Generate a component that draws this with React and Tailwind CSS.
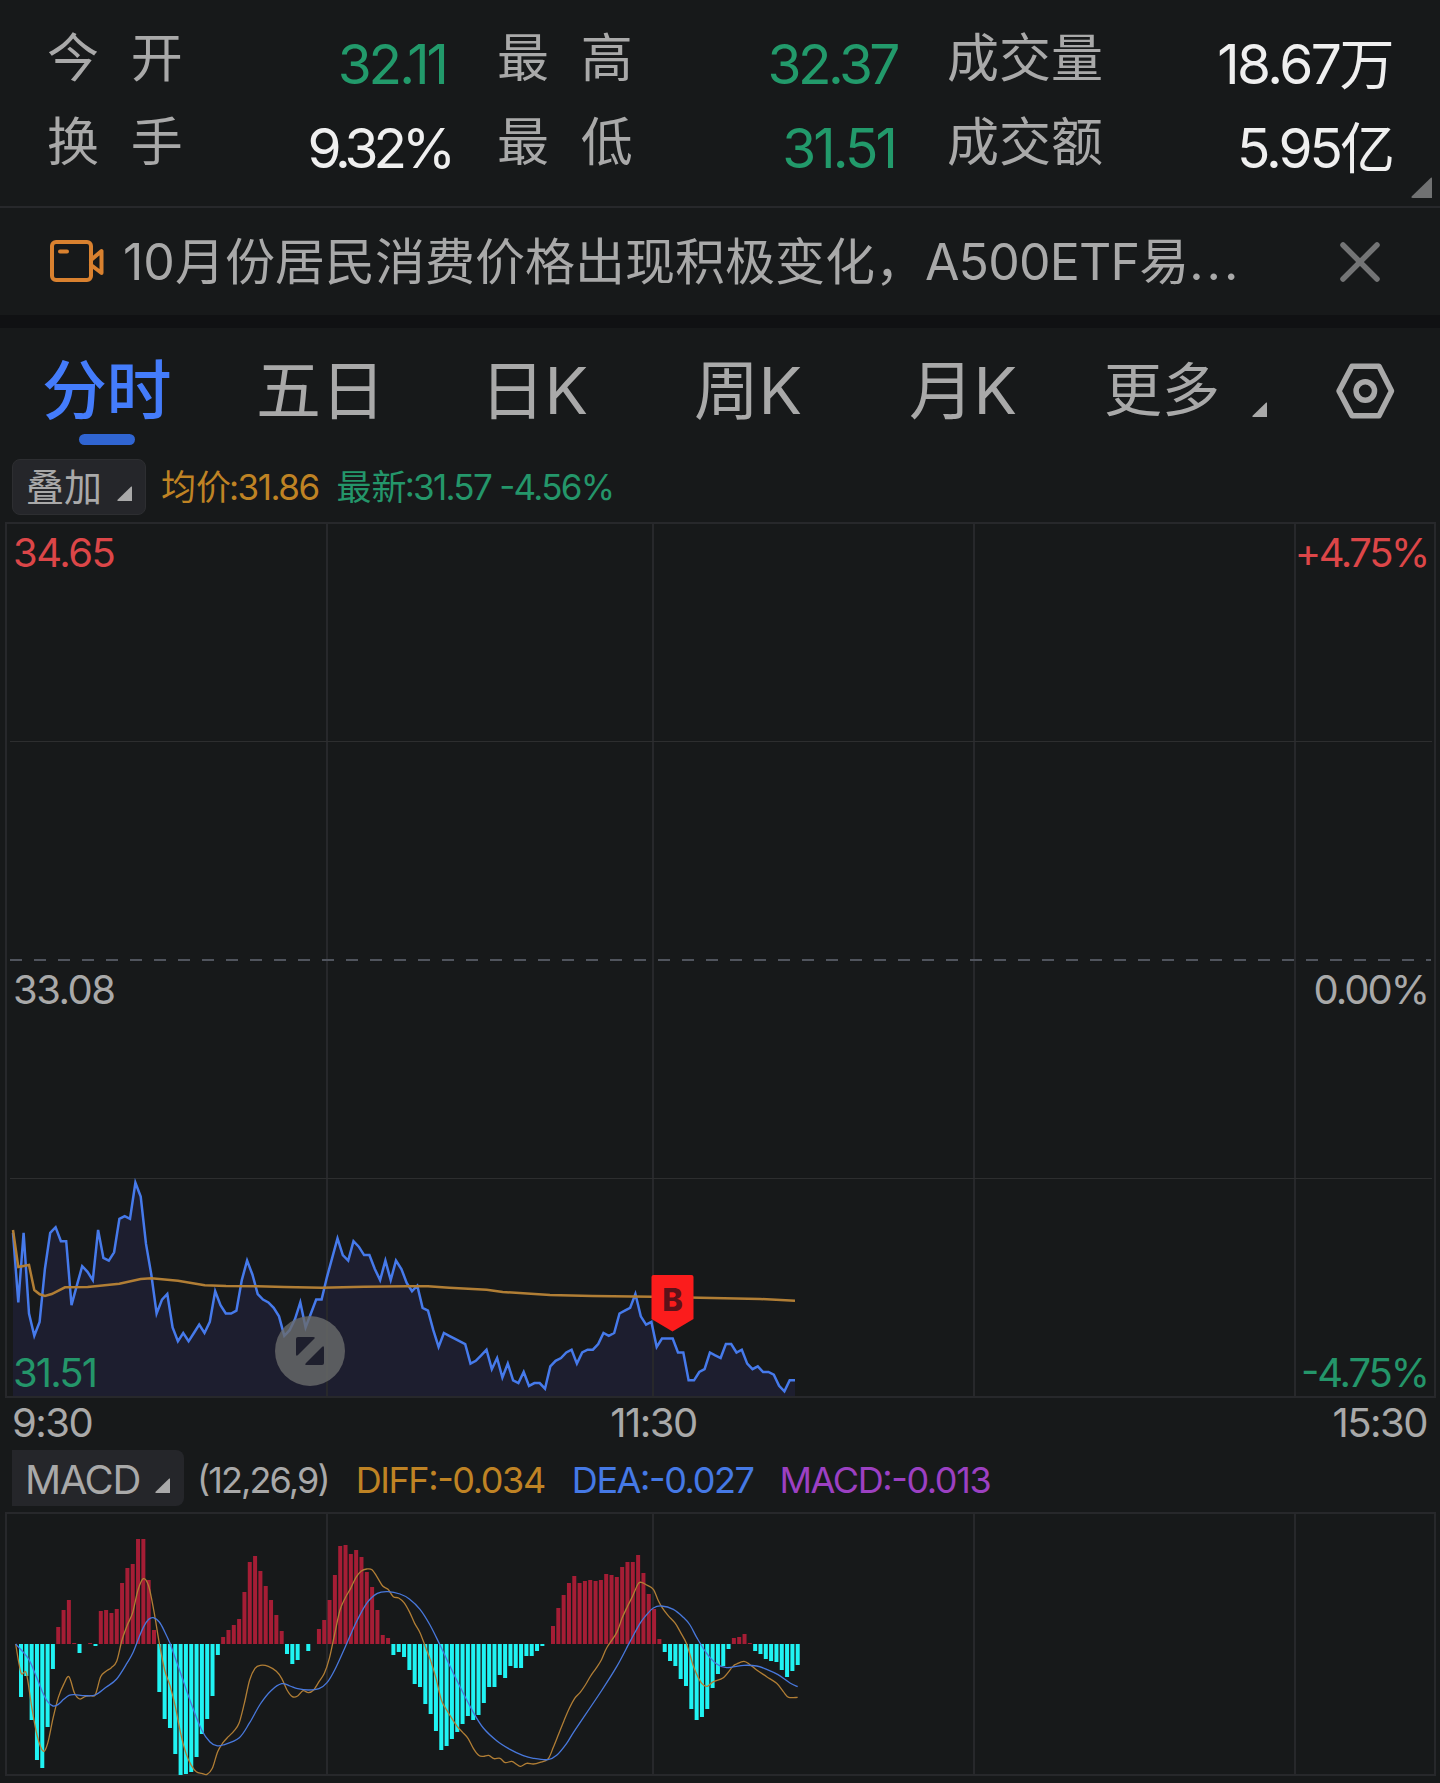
import { useState } from "react"

const QUOTES = [
  { label: '今 开', value: '32.11', className: 'mr-[2px] text-[#229a6b] tracking-[-3px]' },
  { label: '最 高', value: '32.37', className: 'mr-[1px] text-[#229a6b] tracking-[-3.5px]' },
  { label: '成交量', value: '18.67万', className: 'text-[#efefef] tracking-[-2.5px]' },
  { label: '换 手', value: '9.32%', className: '-mr-[3px] text-[#efefef] tracking-[-5px]' },
  { label: '最 低', value: '31.51', className: 'mr-[3px] text-[#229a6b] tracking-[-2.9px]' },
  { label: '成交额', value: '5.95亿', className: 'text-[#efefef] tracking-[-3px]' },
]

const TABS = ['分时', '五日', '日K', '周K', '月K', '更多']

// one value per minute, in cents above the bottom of the scale (31.51)
const PRICES = [
  59, 34, 59, 30, 22, 27, 46, 59, 61, 56, 56, 33, 40, 47, 45, 42, 60, 50, 49, 52,
  64, 65, 64, 77, 72, 55, 44, 30, 35, 37, 25, 20, 23, 20, 23, 26, 23, 27, 38, 33,
  30, 30, 31, 42, 49, 44, 37, 35, 34, 32, 29, 22, 24, 28, 34, 25, 30, 35, 35, 43,
  50, 57, 51, 49, 56, 54, 51, 51, 46, 42, 49, 42, 49, 46, 41, 38, 40, 32, 31, 24,
  18, 23, 22, 21, 20, 19, 12, 13, 15, 17, 10, 14, 7, 12, 6, 5, 9, 4, 5, 5,
  3, 11, 13, 14, 16, 17, 12, 16, 17, 17, 19, 23, 22, 23, 30, 31, 32, 37, 29, 26,
  27, 18, 21, 21, 21, 16, 16, 6, 6, 9, 10, 16, 15, 14, 19, 19, 16, 17, 12, 10,
  11, 9, 9, 8, 4, 2, 6, 6,
]

const AVERAGE = [
  [13, 708], [18.3, 745], [29, 743], [34.3, 768], [39.7, 772.3], [45, 774], [51.7, 772], [65, 765.3],
  [87.7, 765], [119.3, 761.7], [140.7, 757], [151.3, 756.3], [178, 758.7], [204.7, 763.3], [226, 764],
  [257.7, 764.3], [284.3, 765], [321.7, 765.7], [364.3, 764.7], [406.7, 764.3], [428, 764.3],
  [449.3, 765.7], [486.7, 767.7], [502.7, 770], [550, 773], [592.7, 774], [652.7, 774.7],
  [700, 775.7], [760, 777], [795, 778.7],
]

const MACD_BARS = [
  -53, -32, -76, -116, -124, -83, -25, 17, 34, 44, 1, -9, 0, 1, -2, 33, 34, 31, 35, 61,
  76, 80, 105, 105, 64, 14, -48, -75, -84, -110, -131, -130, -128, -113, -90, -75, -52, -11, 7, 14,
  19, 25, 52, 82, 88, 73, 58, 44, 29, 13, -10, -20, -16, 0, -7, 0, 15, 24, 44, 69,
  98, 99, 90, 94, 87, 72, 57, 34, 9, 6, -11, -8, -13, -26, -40, -43, -60, -70, -87, -106,
  -102, -95, -88, -80, -72, -76, -71, -59, -43, -43, -31, -34, -22, -24, -24, -12, -12, -7, -2, 0,
  18, 36, 49, 61, 68, 61, 63, 64, 63, 64, 70, 69, 67, 77, 82, 82, 89, 71, 50, 35,
  5, -8, -17, -22, -35, -42, -65, -76, -73, -65, -44, -30, -22, -5, 6, 7, 10, 1, -7, -10,
  -15, -17, -18, -26, -33, -27, -21,
]

// curve points are kept at 3x resolution
const DIFF = [
  [47, 432], [63, 518], [79, 520], [95, 620], [111, 705], [129, 753], [143, 730], [159, 655], [175, 592],
  [191, 553], [207, 530], [223, 578], [239, 597], [255, 590], [271, 587], [286, 584], [302, 530],
  [318, 514], [334, 503], [350, 484], [366, 420], [382, 375], [398, 338], [414, 270], [430, 236],
  [446, 258], [462, 335], [478, 430], [494, 510], [510, 557], [526, 620], [542, 700], [558, 760],
  [574, 796], [589, 815], [605, 820], [621, 823], [637, 805], [653, 755], [669, 728], [685, 710],
  [701, 694], [717, 670], [733, 610], [749, 540], [765, 505], [781, 496], [805, 499], [829, 514],
  [845, 535], [861, 570], [877, 590], [893, 588], [909, 572], [925, 578], [941, 570], [957, 545],
  [973, 520], [988, 475], [1004, 402], [1020, 330], [1036, 293], [1052, 265], [1068, 232], [1084, 213],
  [1100, 207], [1116, 209], [1132, 232], [1148, 258], [1164, 268], [1180, 290], [1196, 294],
  [1212, 308], [1228, 335], [1244, 370], [1260, 398], [1276, 440], [1292, 482], [1308, 535],
  [1324, 600], [1340, 630], [1356, 656], [1372, 680], [1388, 697], [1404, 715], [1420, 745],
  [1436, 766], [1450, 769], [1466, 766], [1482, 776], [1500, 775], [1516, 788], [1535, 784],
  [1550, 793], [1562, 799], [1580, 790], [1600, 792], [1620, 787], [1644, 777], [1660, 742],
  [1676, 702], [1692, 662], [1708, 625], [1724, 595], [1740, 578], [1756, 555], [1772, 528],
  [1788, 505], [1804, 480], [1820, 444], [1850, 398], [1866, 355], [1882, 320], [1898, 288],
  [1914, 252], [1924, 247], [1940, 255], [1960, 268], [1974, 300], [1986, 322], [2004, 346],
  [2026, 370], [2042, 398], [2060, 432], [2080, 498], [2096, 535], [2108, 553], [2122, 559],
  [2140, 545], [2170, 533], [2198, 500], [2210, 492], [2232, 484], [2250, 494], [2270, 510],
  [2300, 530], [2330, 550], [2350, 575], [2366, 592], [2393, 592],
]

const DEA = [
  [47, 432], [85, 476], [111, 535], [127, 575], [143, 605], [159, 618], [175, 613], [191, 598],
  [207, 586], [223, 584], [255, 587], [286, 585], [318, 562], [350, 537], [382, 488], [398, 460],
  [414, 420], [430, 382], [446, 358], [460, 353], [478, 366], [494, 395], [510, 430], [526, 475],
  [542, 520], [574, 612], [605, 690], [630, 726], [650, 737], [669, 735], [717, 714], [749, 668],
  [781, 612], [813, 572], [845, 551], [870, 558], [893, 566], [925, 570], [957, 566], [981, 548],
  [1004, 510], [1036, 440], [1068, 368], [1100, 310], [1132, 280], [1164, 275], [1200, 282],
  [1228, 297], [1260, 328], [1290, 375], [1320, 435], [1370, 540], [1420, 637], [1450, 684],
  [1490, 722], [1530, 748], [1570, 767], [1600, 775], [1644, 779], [1670, 766], [1700, 730],
  [1724, 692], [1804, 573], [1850, 500], [1890, 425], [1920, 370], [1940, 344], [1960, 324],
  [1984, 318], [2020, 328], [2050, 352], [2070, 375], [2090, 412], [2120, 460], [2150, 492],
  [2180, 503], [2232, 496], [2270, 498], [2300, 508], [2334, 524], [2370, 549], [2393, 560],
]

const STEP = 5.32
const GRID_X = [327, 653, 974, 1295]

const priceLine = PRICES.map((p, i) => `${(13 + i * STEP).toFixed(1)},${(875 - p * 2.783).toFixed(1)}`).join(' ')

const smoothPath = (points) => {
  const pts = points.map(([x, y]) => [x / 3, (y - 36) / 3])
  let d = `M${pts[0][0]},${pts[0][1]}`
  for (let i = 0; i < pts.length - 1; i++) {
    const a = pts[i - 1] || pts[i]
    const b = pts[i]
    const c = pts[i + 1]
    const e = pts[i + 2] || c
    d += ` C${b[0] + (c[0] - a[0]) / 6},${b[1] + (c[1] - a[1]) / 6} ${c[0] - (e[0] - b[0]) / 6},${c[1] - (e[1] - b[1]) / 6} ${c[0]},${c[1]}`
  }
  return d
}

function Corner({ size, className }) {
  return (
    <svg width={size} height={size} viewBox="0 0 15 15" className={className} fill="currentColor">
      <path d="M14.2 0.6 Q15 0 15 1 V15 H1.2 Q-0.3 15 0.6 13.8 Z" />
    </svg>
  )
}

function Header() {
  return (
    <div className="relative h-[208px] border-b-2 border-[#27282b] pt-[15px] pl-12">
      <div className="grid grid-cols-[400px_400px_444px] gap-x-[50px]">
        {QUOTES.map(q => (
          <div key={q.label} className="flex h-[84px] items-center justify-between">
            <span className="-ml-px pt-[4px] text-[52px] leading-[80px] [word-spacing:17px]">{q.label}</span>
            <span className={`pt-[15px] text-[55px] leading-[69px] ${q.className}`}>{q.value}</span>
          </div>
        ))}
      </div>
      <Corner size={21} className="absolute right-2 bottom-2 text-[#707172]" />
    </div>
  )
}

function News({ onClose }) {
  return (
    <div className="flex h-[107px] items-center pl-[49px]">
      <svg width="56" height="44" viewBox="0 0 56 44" fill="none" stroke="#d9812f" strokeWidth="4" strokeLinejoin="round" strokeLinecap="round">
        <rect x="3" y="2" width="39" height="38" rx="4" />
        <path d="M11 11.5 h7" />
        <path d="M42 20 L52.5 11 V33 L42 25" />
      </svg>
      <span className="ml-[18px] w-[1129px] pt-[2px] text-[50px] whitespace-nowrap">
        <span>10</span>月份居民消费价格出现积极变化，<span className="tracking-[-0.8px]">A500ETF</span>易<span className="tracking-[3px]">...</span>
      </span>
      <button onClick={onClose} className="ml-[86px] cursor-pointer">
        <svg width="44" height="44" viewBox="0 0 44 44" stroke="#737475" strokeWidth="5.5" strokeLinecap="round">
          <path d="M5 5 L39 39 M39 5 L5 39" />
        </svg>
      </button>
    </div>
  )
}

function Tabs({ active, onChange }) {
  return (
    <div className="relative grid h-[131px] grid-cols-[214px_224px_214px_215px_195px_auto] pl-[42px]">
      {TABS.map(tab => (
        <button
          key={tab}
          onClick={() => onChange(tab)}
          className={`flex cursor-pointer flex-col pt-[19px] text-left leading-[87px] ${tab === '更多' ? 'w-[170px] text-[58px]' : 'w-[134px] text-[65px] tracking-[-0.5px]'} ${tab === active ? 'font-medium text-[#447cfb]' : ''}`}
        >
          {tab === '更多' ? (
            <span className="flex items-end">
              {tab}
              <Corner size={15} className="mb-[17px] ml-[32px]" />
            </span>
          ) : tab}
          {tab === active && <span className="ml-[37px] h-[11px] w-[56px] rounded-full bg-[#3065d2]" />}
        </button>
      ))}
      <svg width="60" height="56" viewBox="0 0 60 56" className="absolute top-[35px] right-[45px]" fill="none" stroke="#a9a9a9" strokeWidth="5.5" strokeLinejoin="round">
        <path d="M17 3.2 H44 L56.5 28 L44 52.8 H17 L4 28 Z" />
        <circle cx="30.3" cy="28" r="9.2" />
      </svg>
    </div>
  )
}

function PickerButton({ children, className }) {
  return (
    <button className={`flex h-14 cursor-pointer items-center bg-[#25262a] ${className}`}>
      {children}
    </button>
  )
}

function PriceChart() {
  return (
    <div className="relative mt-[7px] h-[876px]">
      <svg width="1440" height="876" className="absolute inset-0">
        <polygon points={`13,875 ${priceLine} 795,875`} fill="#1d1e2f" />
        <g stroke="#27282b" strokeWidth="2" fill="none">
          <rect x="6" y="1" width="1429" height="874" />
          {GRID_X.map(x => <path key={x} d={`M${x} 1 V875`} />)}
        </g>
        <path d="M10 219.5 H1432 M10 656.5 H1432" stroke="#2d2e2f" />
        <path d="M10 438 H1431" stroke="#50545d" strokeWidth="2" strokeDasharray="12 12" />
        <polyline points={priceLine} fill="none" stroke="#467aeb" strokeWidth="2.5" />
        <polyline points={AVERAGE.map(p => p.join(',')).join(' ')} fill="none" stroke="#b17e35" strokeWidth="2.5" />
        <path d="M653 753 H691.5 Q693.5 753 693.5 755 V797 L672.5 809.5 L651.5 797 V755 Q651.5 753 653.5 753 Z" fill="#fb1c1c" />
        <text x="672.5" y="789" textAnchor="middle" fontSize="31" fontWeight="800" fill="#5c1219">B</text>
        <g className="cursor-pointer">
          <circle cx="310" cy="829" r="35" fill="#6a6b6b" fillOpacity="0.8" />
          <path d="M298 815 H313 Q316 815 314 817 L298 833 Q296 835 296 832 V817 Q296 815 298 815 Z" fill="#1e1f2d" />
          <path d="M322 843 H307 Q304 843 306 841 L322 825 Q324 823 324 826 V841 Q324 843 322 843 Z" fill="#1e1f2d" />
        </g>
      </svg>
      <div className="relative pt-[7px] pr-[12px] pl-[13px] text-[40px] leading-[48px] tracking-[-1.5px]">
        <div className="flex justify-between text-[#dc4648]">
          <span>34.65</span>
          <span className="tracking-[-2.4px]">+4.75%</span>
        </div>
        <div className="mt-[389px] flex justify-between">
          <span>33.08</span>
          <span className="tracking-[-2px]">0.00%</span>
        </div>
        <div className="mt-[335px] flex justify-between text-[#24966a]">
          <span className="tracking-[-1.9px]">31.51</span>
          <span className="tracking-[-2.1px] [font-feature-settings:'case']">-4.75%</span>
        </div>
      </div>
    </div>
  )
}

function MacdChart() {
  return (
    <svg width="1440" height="264" className="mt-[6px] block">
      <g stroke="#27282b" strokeWidth="2" fill="none">
        <rect x="6" y="1" width="1429" height="262" />
        {GRID_X.map(x => <path key={x} d={`M${x} 1 V263`} />)}
      </g>
      {MACD_BARS.map((v, i) => (
        <rect
          key={i}
          x={19 + i * STEP}
          y={v > 0 ? 132 - v : 132}
          width="4"
          height={Math.abs(v)}
          fill={v > 0 ? '#a51d35' : '#20f3f3'}
        />
      ))}
      <path d={smoothPath(DIFF)} fill="none" stroke="#b17e35" strokeWidth="1.3" />
      <path d={smoothPath(DEA)} fill="none" stroke="#4878dc" strokeWidth="1.3" />
    </svg>
  )
}

export default function App() {
  const [activeTab, setActiveTab] = useState('分时')
  const [showNews, setShowNews] = useState(true)

  return (
    <div className="h-[1783px] w-[1440px] overflow-hidden bg-[#17191a] font-[Inter,'Noto_Sans_CJK_SC',sans-serif] font-[375] text-[#a9a9a9]">
      <Header />
      {showNews && <News onClose={() => setShowNews(false)} />}
      <div className="h-[13px] bg-[#101113]" />
      <Tabs active={activeTab} onChange={setActiveTab} />

      <div className="flex h-14 items-center pl-3 text-[35px]">
        <PickerButton className="w-[134px] rounded-lg border border-[#2d2e31] pl-[13px] text-[38px]">
          叠加
          <Corner size={15} className="mt-[13px] ml-[15px]" />
        </PickerButton>
        <span className="ml-[15px] text-[#bf8324]">均价<span className="-ml-[2px] tracking-[-1.5px]">:31.86</span></span>
        <span className="ml-[18px] text-[#24966a]">
          最新<span className="-ml-[2px] tracking-[-1.7px] [font-feature-settings:'case']">:31.57 -4.56%</span>
        </span>
      </div>

      <PriceChart />

      <div className="grid h-[52px] grid-cols-3 pt-px pr-[13px] pl-[12px] text-[40px] leading-[48px] tracking-[-1.5px]">
        <span>9:30</span>
        <span className="pr-[132px] text-center">11:30</span>
        <span className="text-right">15:30</span>
      </div>

      <div className="flex h-14 items-center pl-3 text-[36px] tracking-[-1.4px] [font-feature-settings:'case']">
        <PickerButton className="w-[172px] rounded-r-lg pt-[3px] pl-[13px] text-[40px] tracking-[-1.4px]">
          MACD
          <Corner size={15} className="mt-[11px] ml-[15px]" />
        </PickerButton>
        <span className="ml-[13px] pt-[3px] tracking-[-1.9px]">(12,26,9)</span>
        <span className="ml-[27px] pt-[3px] text-[#bf8324]">DIFF:-0.034</span>
        <span className="ml-[27px] pt-[3px] text-[#4579e6]">DEA:-0.027</span>
        <span className="ml-[26px] pt-[3px] text-[#9c40c2]">MACD:-0.013</span>
      </div>

      <MacdChart />
    </div>
  )
}
